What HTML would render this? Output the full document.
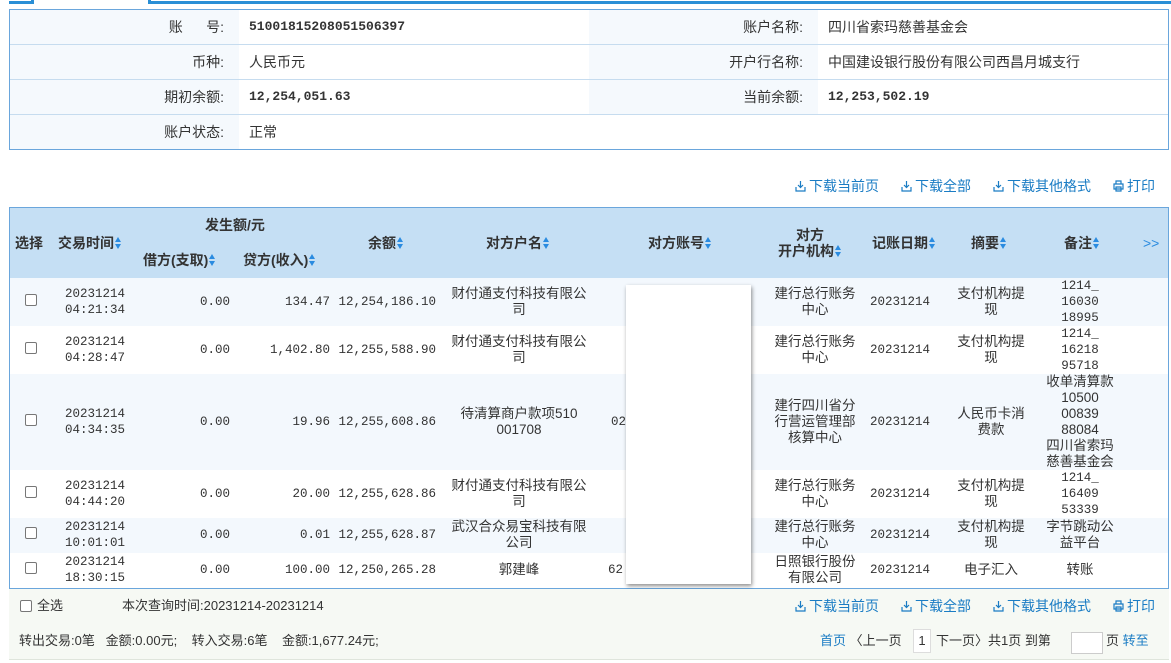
<!DOCTYPE html>
<html><head><meta charset="utf-8">
<style>
*{margin:0;padding:0;box-sizing:border-box}
body{width:1171px;height:663px;overflow:hidden;background:#fff;font-family:"Liberation Sans","WenQuanYi Zen Hei","Noto Sans CJK SC",sans-serif;font-size:13px;color:#333;position:relative}
.a{position:absolute}
.t{position:absolute;line-height:16px;white-space:nowrap}
.c{text-align:center}
.r{text-align:right}
.m{font-family:"Liberation Mono","WenQuanYi Zen Hei",monospace;font-size:12.5px}
.lk{color:#1a7cc4;font-size:14px}
.h{font-weight:bold;font-size:14px;color:#333}
.ar{display:inline-block;width:7px;height:14px;vertical-align:-2px;margin-left:1px;position:relative}
.ar:before{content:"";position:absolute;left:0;top:1px;border-left:3.5px solid transparent;border-right:3.5px solid transparent;border-bottom:5px solid #2a8be0}
.ar:after{content:"";position:absolute;left:0;top:8px;border-left:3.5px solid transparent;border-right:3.5px solid transparent;border-top:5px solid #2a8be0}
.cb{position:absolute;width:12px;height:12px;border:1px solid #777;border-radius:2px;background:#fff}
.dl{display:inline-block;width:11px;height:12px;vertical-align:-1px;margin-right:3px}
</style></head><body>
<svg width="0" height="0" style="position:absolute"><defs>
<symbol id="d" viewBox="0 0 11 12"><path d="M5.5 1v6M3 5l2.5 2.5L8 5M1 7v4h9V7" fill="none" stroke="#1a7cc4" stroke-width="1.2"/></symbol>
<symbol id="p" viewBox="0 0 11 12"><path d="M3 1h5v3H3zM1 4h9v5H1zM3 7h5v4H3z" fill="none" stroke="#1a7cc4" stroke-width="1.2"/></symbol>
</defs></svg>
<!-- tabs -->
<div class="a" style="left:9px;top:1px;width:25px;height:3px;background:#2a8fd6"></div>
<div class="a" style="left:31px;top:0;width:3px;height:4px;background:#2a8fd6"></div>
<div class="a" style="left:148px;top:0;width:3px;height:4px;background:#2a8fd6"></div>
<div class="a" style="left:148px;top:1px;width:1023px;height:3px;background:#2a8fd6"></div>

<!-- info box -->
<div class="a" style="left:9px;top:9px;width:1160px;height:141px;border:1px solid #6aa6dc;background:#fff"></div>
<div class="a" style="left:10px;top:10px;width:229px;height:139px;background:#f5f9fd"></div>
<div class="a" style="left:589px;top:10px;width:229px;height:104px;background:#f5f9fd"></div>
<div class="a" style="left:10px;top:44px;width:1158px;height:1px;background:#c6dcef"></div>
<div class="a" style="left:10px;top:79px;width:1158px;height:1px;background:#c6dcef"></div>
<div class="a" style="left:10px;top:114px;width:1158px;height:1px;background:#c6dcef"></div>
<div class="t r" style="left:120px;top:19px;width:104px;font-size:14px">账&nbsp;&nbsp;&nbsp;&nbsp;&nbsp;&nbsp;号:</div>
<div class="t r" style="left:120px;top:54px;width:104px;font-size:14px">币种:</div>
<div class="t r" style="left:120px;top:89px;width:104px;font-size:14px">期初余额:</div>
<div class="t r" style="left:120px;top:124px;width:104px;font-size:14px">账户状态:</div>
<div class="t m" style="left:249px;top:19px;font-weight:bold;font-size:13px">51001815208051506397</div>
<div class="t" style="left:249px;top:54px;font-size:14px">人民币元</div>
<div class="t m" style="left:249px;top:89px;font-weight:bold;font-size:13px">12,254,051.63</div>
<div class="t" style="left:249px;top:124px;font-size:14px">正常</div>
<div class="t r" style="left:700px;top:19px;width:103px;font-size:14px">账户名称:</div>
<div class="t r" style="left:700px;top:54px;width:103px;font-size:14px">开户行名称:</div>
<div class="t r" style="left:700px;top:89px;width:103px;font-size:14px">当前余额:</div>
<div class="t" style="left:828px;top:19px;font-size:14px">四川省索玛慈善基金会</div>
<div class="t" style="left:828px;top:54px;font-size:14px">中国建设银行股份有限公司西昌月城支行</div>
<div class="t m" style="left:828px;top:89px;font-weight:bold;font-size:13px">12,253,502.19</div>

<!-- top links -->
<div class="t lk" style="left:795px;top:178px"><svg class="dl"><use href="#d"/></svg>下载当前页</div>
<div class="t lk" style="left:901px;top:178px"><svg class="dl"><use href="#d"/></svg>下载全部</div>
<div class="t lk" style="left:993px;top:178px"><svg class="dl"><use href="#d"/></svg>下载其他格式</div>
<div class="t lk" style="left:1113px;top:178px"><svg class="dl"><use href="#p"/></svg>打印</div>

<!-- table -->
<div class="a" style="left:9px;top:207px;width:1160px;height:382px;border:1px solid #6aa6dc;background:#fff"></div>
<div class="a" style="left:10px;top:208px;width:1158px;height:70px;background:#c5dff4"></div>
<div class="a" style="left:10px;top:278px;width:1158px;height:48px;background:#f3f8fd"></div>
<div class="a" style="left:10px;top:374px;width:1158px;height:96px;background:#f3f8fd"></div>
<div class="a" style="left:10px;top:518px;width:1158px;height:35px;background:#f3f8fd"></div>

<div class="t h" style="left:15px;top:235px">选择</div>
<div class="t h" style="left:58px;top:235px">交易时间<span class="ar"></span></div>
<div class="t h c" style="left:135px;top:217px;width:200px">发生额/元</div>
<div class="t h" style="left:143px;top:252px">借方(支取)<span class="ar"></span></div>
<div class="t h" style="left:243px;top:252px">贷方(收入)<span class="ar"></span></div>
<div class="t h" style="left:368px;top:235px">余额<span class="ar"></span></div>
<div class="t h" style="left:486px;top:235px">对方户名<span class="ar"></span></div>
<div class="t h" style="left:648px;top:235px">对方账号<span class="ar"></span></div>
<div class="t h c" style="left:760px;top:227px;width:100px">对方<br>开户机构<span class="ar"></span></div>
<div class="t h" style="left:872px;top:235px">记账日期<span class="ar"></span></div>
<div class="t h" style="left:971px;top:235px">摘要<span class="ar"></span></div>
<div class="t h" style="left:1064px;top:235px">备注<span class="ar"></span></div>
<div class="t" style="left:1143px;top:235px;color:#2a8be0;font-size:14px">&gt;&gt;</div>

<!-- rows -->
<div class="cb" style="left:25px;top:294px"></div>
<div class="cb" style="left:25px;top:342px"></div>
<div class="cb" style="left:25px;top:414px"></div>
<div class="cb" style="left:25px;top:486px"></div>
<div class="cb" style="left:25px;top:527px"></div>
<div class="cb" style="left:25px;top:562px"></div>

<div class="t m c" style="left:50px;top:286px;width:90px">20231214<br>04:21:34</div>
<div class="t m c" style="left:50px;top:334px;width:90px">20231214<br>04:28:47</div>
<div class="t m c" style="left:50px;top:406px;width:90px">20231214<br>04:34:35</div>
<div class="t m c" style="left:50px;top:478px;width:90px">20231214<br>04:44:20</div>
<div class="t m c" style="left:50px;top:519px;width:90px">20231214<br>10:01:01</div>
<div class="t m c" style="left:50px;top:554px;width:90px">20231214<br>18:30:15</div>

<div class="t m r" style="left:130px;top:294px;width:100px">0.00</div>
<div class="t m r" style="left:130px;top:342px;width:100px">0.00</div>
<div class="t m r" style="left:130px;top:414px;width:100px">0.00</div>
<div class="t m r" style="left:130px;top:486px;width:100px">0.00</div>
<div class="t m r" style="left:130px;top:527px;width:100px">0.00</div>
<div class="t m r" style="left:130px;top:562px;width:100px">0.00</div>

<div class="t m r" style="left:230px;top:294px;width:100px">134.47</div>
<div class="t m r" style="left:230px;top:342px;width:100px">1,402.80</div>
<div class="t m r" style="left:230px;top:414px;width:100px">19.96</div>
<div class="t m r" style="left:230px;top:486px;width:100px">20.00</div>
<div class="t m r" style="left:230px;top:527px;width:100px">0.01</div>
<div class="t m r" style="left:230px;top:562px;width:100px">100.00</div>

<div class="t m r" style="left:330px;top:294px;width:106px">12,254,186.10</div>
<div class="t m r" style="left:330px;top:342px;width:106px">12,255,588.90</div>
<div class="t m r" style="left:330px;top:414px;width:106px">12,255,608.86</div>
<div class="t m r" style="left:330px;top:486px;width:106px">12,255,628.86</div>
<div class="t m r" style="left:330px;top:527px;width:106px">12,255,628.87</div>
<div class="t m r" style="left:330px;top:562px;width:106px">12,250,265.28</div>

<div class="t c" style="left:446px;top:286px;width:146px;white-space:normal;font-size:13.5px">财付通支付科技有限公司</div>
<div class="t c" style="left:446px;top:334px;width:146px;white-space:normal;font-size:13.5px">财付通支付科技有限公司</div>
<div class="t c" style="left:446px;top:406px;width:146px;white-space:normal;font-size:13.5px">待清算商户款项510<br>001708</div>
<div class="t c" style="left:446px;top:478px;width:146px;white-space:normal;font-size:13.5px">财付通支付科技有限公司</div>
<div class="t c" style="left:446px;top:519px;width:146px;white-space:normal;font-size:13.5px">武汉合众易宝科技有限公司</div>
<div class="t c" style="left:446px;top:562px;width:146px;font-size:13.5px">郭建峰</div>
<div class="t m" style="left:611px;top:414px">02</div>
<div class="t m" style="left:608px;top:562px">62</div>

<div class="a" style="left:626px;top:285px;width:125px;height:299px;background:#fff;box-shadow:1px 2px 4px rgba(0,0,0,0.45)"></div>

<div class="t c" style="left:770px;top:286px;width:90px;white-space:normal;font-size:13.5px">建行总行账务中心</div>
<div class="t c" style="left:770px;top:334px;width:90px;white-space:normal;font-size:13.5px">建行总行账务中心</div>
<div class="t c" style="left:770px;top:398px;width:90px;white-space:normal;font-size:13.5px">建行四川省分行营运管理部核算中心</div>
<div class="t c" style="left:770px;top:478px;width:90px;white-space:normal;font-size:13.5px">建行总行账务中心</div>
<div class="t c" style="left:770px;top:519px;width:90px;white-space:normal;font-size:13.5px">建行总行账务中心</div>
<div class="t c" style="left:770px;top:554px;width:90px;white-space:normal;font-size:13.5px">日照银行股份有限公司</div>

<div class="t m c" style="left:862px;top:294px;width:76px">20231214</div>
<div class="t m c" style="left:862px;top:342px;width:76px">20231214</div>
<div class="t m c" style="left:862px;top:414px;width:76px">20231214</div>
<div class="t m c" style="left:862px;top:486px;width:76px">20231214</div>
<div class="t m c" style="left:862px;top:527px;width:76px">20231214</div>
<div class="t m c" style="left:862px;top:562px;width:76px">20231214</div>

<div class="t c" style="left:955px;top:286px;width:72px;white-space:normal;font-size:13.5px">支付机构提现</div>
<div class="t c" style="left:955px;top:334px;width:72px;white-space:normal;font-size:13.5px">支付机构提现</div>
<div class="t c" style="left:955px;top:406px;width:72px;white-space:normal;font-size:13.5px">人民币卡消费款</div>
<div class="t c" style="left:955px;top:478px;width:72px;white-space:normal;font-size:13.5px">支付机构提现</div>
<div class="t c" style="left:955px;top:519px;width:72px;white-space:normal;font-size:13.5px">支付机构提现</div>
<div class="t c" style="left:955px;top:562px;width:72px;font-size:13.5px">电子汇入</div>

<div class="t m c" style="left:1045px;top:278px;width:70px">1214_<br>16030<br>18995</div>
<div class="t m c" style="left:1045px;top:326px;width:70px">1214_<br>16218<br>95718</div>
<div class="t c" style="left:1040px;top:374px;width:80px;font-size:13.5px">收单清算款<br>10500<br>00839<br>88084<br>四川省索玛<br>慈善基金会</div>
<div class="t m c" style="left:1045px;top:470px;width:70px">1214_<br>16409<br>53339</div>
<div class="t c" style="left:1040px;top:519px;width:80px;font-size:13.5px">字节跳动公<br>益平台</div>
<div class="t c" style="left:1040px;top:562px;width:80px;font-size:13.5px">转账</div>

<!-- footer -->
<div class="a" style="left:9px;top:589px;width:1160px;height:71px;background:#f6f9f4;border-bottom:1px solid #dfe5dc"></div>
<div class="cb" style="left:20px;top:600px"></div>
<div class="t" style="left:37px;top:598px">全选</div>
<div class="t" style="left:122px;top:598px">本次查询时间:20231214-20231214</div>
<div class="t lk" style="left:795px;top:598px"><svg class="dl"><use href="#d"/></svg>下载当前页</div>
<div class="t lk" style="left:901px;top:598px"><svg class="dl"><use href="#d"/></svg>下载全部</div>
<div class="t lk" style="left:993px;top:598px"><svg class="dl"><use href="#d"/></svg>下载其他格式</div>
<div class="t lk" style="left:1113px;top:598px"><svg class="dl"><use href="#p"/></svg>打印</div>

<div class="t" style="left:19px;top:633px">转出交易:0笔&nbsp;&nbsp;&nbsp;金额:0.00元;&nbsp;&nbsp;&nbsp;&nbsp;转入交易:6笔&nbsp;&nbsp;&nbsp;&nbsp;金额:1,677.24元;</div>
<div class="t" style="left:820px;top:633px"><span style="color:#1a7cc4">首页</span> 〈上一页</div>
<div class="a" style="left:913px;top:629px;width:18px;height:24px;border:1px solid #ddd;background:#fff;text-align:center;line-height:22px">1</div>
<div class="t" style="left:936px;top:633px">下一页〉共1页 到第</div>
<div class="a" style="left:1071px;top:632px;width:32px;height:22px;border:1px solid #ccc;background:#fff"></div>
<div class="t" style="left:1106px;top:633px">页 <span style="color:#1a7cc4">转至</span></div>
</body></html>
